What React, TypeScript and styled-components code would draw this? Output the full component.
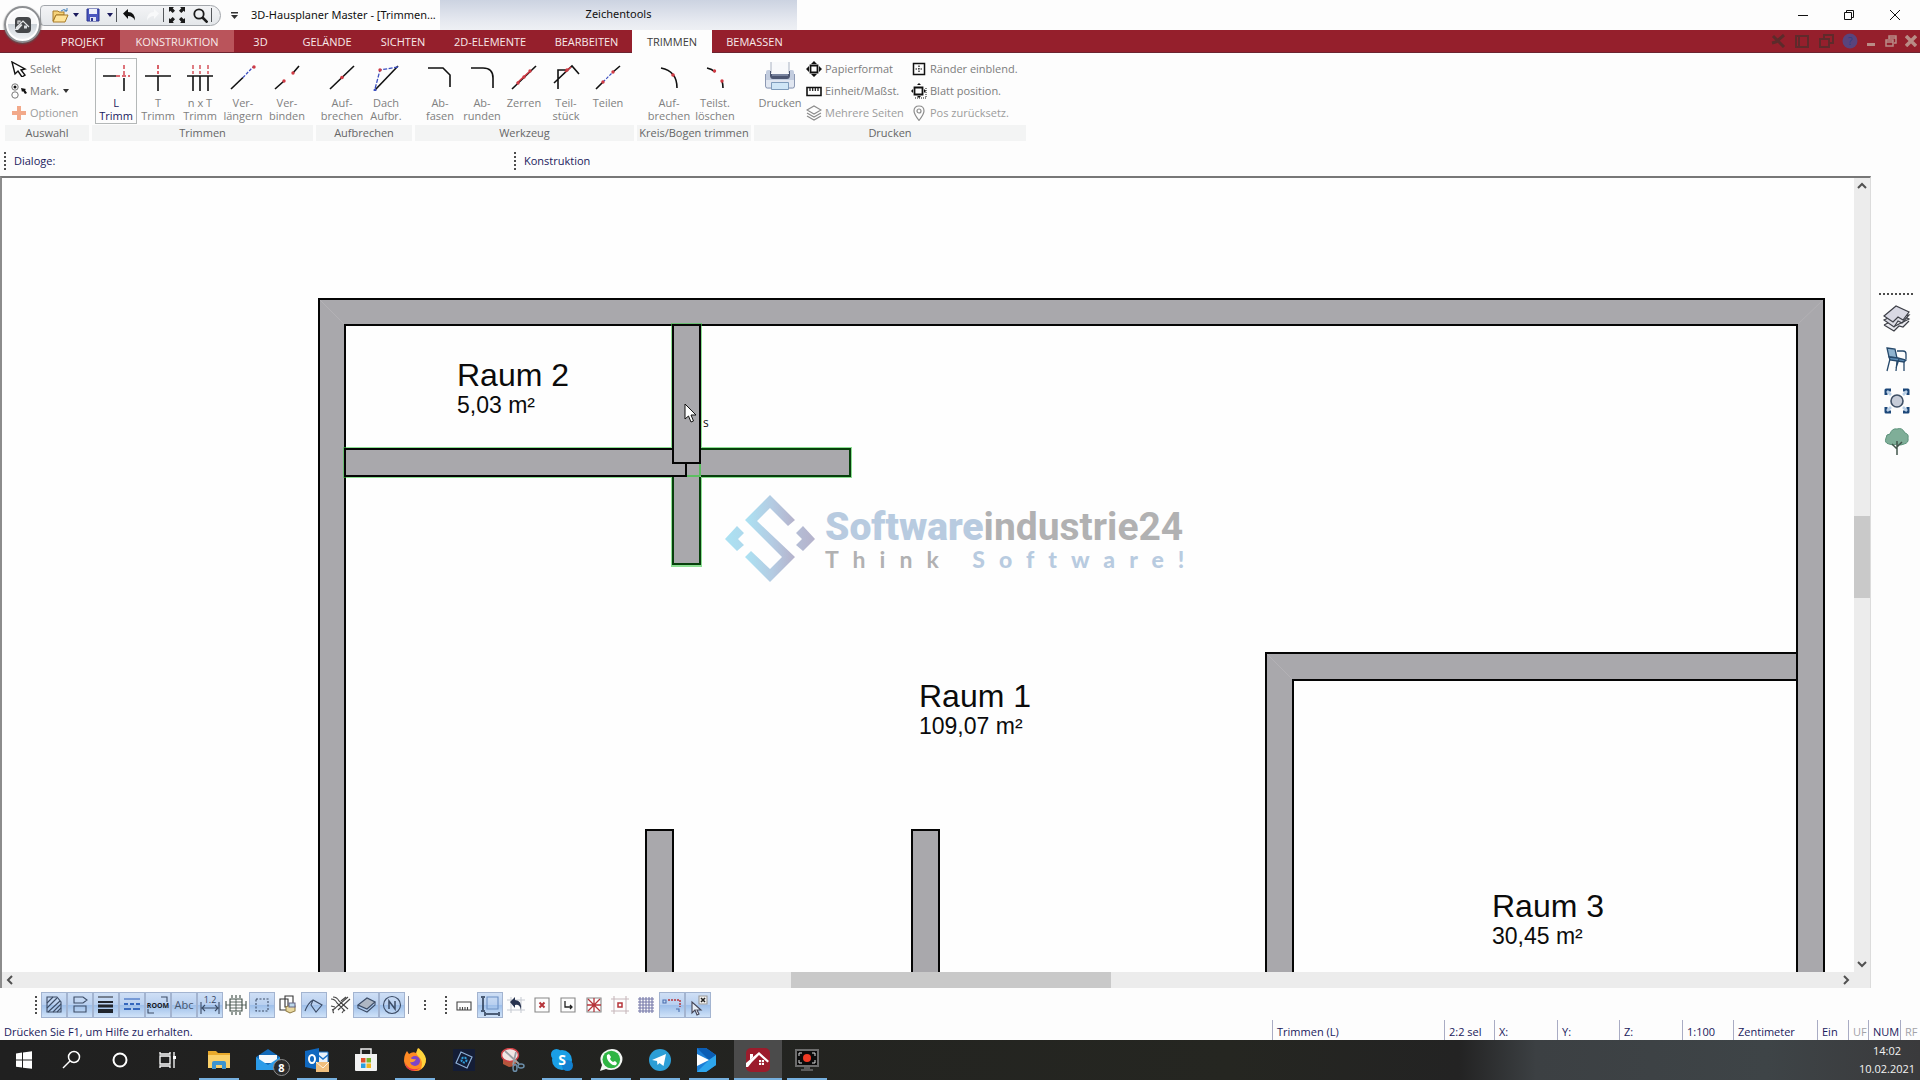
import React from 'react';
import styled, { createGlobalStyle, css } from 'styled-components';

const UI = '"Open Sans", "Noto Sans", "Liberation Sans", sans-serif';
const NAVY = '#1a1a5c';
const CRIMSON = '#951f2c';
const RED = '#d03a44';
const BLUE = '#3b4fc0';

const GlobalStyle = createGlobalStyle`
  *, *::before, *::after { box-sizing: border-box; }
  body { margin: 0; background: #fdfdfd; font: 12px/16px ${UI}; color: #111; }
  button { font: inherit; color: inherit; border: 0; padding: 0; margin: 0; background: none; }
  svg { display: block; flex: none; }
`;

const Shell = styled.div`
  display: flex;
  flex-direction: column;
  height: 100vh;
  overflow: hidden;
  background: #fdfdfd;
`;

/* ---------- title bar ---------- */

const TitleBar = styled.header`
  position: relative;
  display: flex;
  align-items: center;
  height: 30px;
  flex: none;
`;
const AppButton = styled.button`
  position: absolute;
  left: 4px;
  top: 6px;
  z-index: 2;
  width: 37px;
  height: 37px;
  display: grid;
  place-items: center;
  border-radius: 50%;
  border: 2px solid #8d8f92;
  background: linear-gradient(#f8f8f9 0 50%, #cdd3d9 50%, #f4f6f8);
  box-shadow: inset 0 0 0 2px #fff, 0 1px 2px #555;
`;
const QuickBar = styled.div`
  display: flex;
  align-items: center;
  margin-left: 40px;
  width: 181px;
  height: 21px;
  padding-left: 10px;
  border: 1px solid #a2a6ab;
  border-radius: 4px 11px 11px 4px;
  background: linear-gradient(#f3f4f6, #e4e7ea);
`;
const QuickButton = styled.button<{ $w: number }>`
  width: ${p => p.$w}px;
  height: 19px;
  display: grid;
  place-items: center;
`;
const QuickRule = styled.span`
  width: 1px;
  height: 14px;
  background: #55585c;
`;
const CustomizeButton = styled.button`
  width: 26px;
  height: 20px;
  display: grid;
  place-items: center;
`;
const WindowTitle = styled.h1`
  margin: 0;
  padding-left: 4px;
  width: 193px;
  font: 11px/16px "Noto Sans", sans-serif;
  white-space: nowrap;
  color: #111;
`;
const ContextTitle = styled.div`
  width: 357px;
  height: 30px;
  text-align: center;
  font: 11px/28px "Noto Sans", sans-serif;
  background: linear-gradient(#ccd3e1, #e6e9f0 70%, #eef0f4);
`;
const WindowButtons = styled.div`
  display: flex;
  margin-left: auto;
  padding-right: 2px;
`;
const WindowButton = styled.button`
  width: 46px;
  height: 28px;
  display: grid;
  place-items: center;
`;

/* ---------- tab strip ---------- */

const TabStrip = styled.nav`
  display: flex;
  height: 23px;
  flex: none;
  padding-left: 46px;
  background: ${CRIMSON};
  border-bottom: 1px solid #6c2431;
`;
const Tab = styled.button<{ $w: number; $look?: 'soft' | 'active' }>`
  width: ${p => p.$w}px;
  height: 23px;
  line-height: 22px;
  padding-top: 1px;
  font-size: 11px;
  text-align: center;
  color: #f8e9ea;
  ${p => p.$look === 'soft' && css`background: linear-gradient(#ba545b 22px, transparent 22px);`}
  ${p => p.$look === 'active' && css`background: #fdfdfd; color: #3c3c3c;`}
`;
const MdiButtons = styled.div`
  display: flex;
  align-items: center;
  margin-left: auto;
`;
const MdiButton = styled.button<{ $w: number }>`
  width: ${p => p.$w}px;
  height: 20px;
  display: grid;
  place-items: center;
`;

/* ---------- ribbon ---------- */

const Ribbon = styled.div`
  display: flex;
  gap: 3px;
  height: 90px;
  flex: none;
  padding: 5px 0 0 5px;
`;
const Group = styled.section<{ $w: number }>`
  width: ${p => p.$w}px;
  display: flex;
  flex-direction: column;
`;
const GroupBody = styled.div<{ $pad: number }>`
  display: flex;
  height: 67px;
  padding-left: ${p => p.$pad}px;
`;
const GroupName = styled.h2`
  margin: 0;
  height: 16px;
  font: 11px/15px ${UI};
  text-align: center;
  color: #666;
  background: #f3f4f4;
  white-space: nowrap;
`;
const ToolButton = styled.button<{ $w: number; $on?: boolean }>`
  width: ${p => p.$w}px;
  height: 66px;
  display: flex;
  flex-direction: column;
  align-items: center;
  padding-top: 3px;
  border: 1px solid ${p => (p.$on ? '#b4b8b8' : 'transparent')};
  color: ${p => (p.$on ? NAVY : '#808080')};
  font-size: 11px;
  line-height: 13px;
  white-space: nowrap;
  svg { margin-bottom: 5px; }
`;
const SmallColumn = styled.div<{ $w: number }>`
  width: ${p => p.$w}px;
  display: flex;
  flex-direction: column;
`;
const SmallButton = styled.button<{ $dim?: boolean }>`
  height: 22px;
  display: flex;
  align-items: center;
  gap: 3px;
  font-size: 11px;
  white-space: nowrap;
  color: ${p => (p.$dim ? '#9c9c9c' : '#7c7c7c')};
`;

/* ---------- dialog row ---------- */

const DialogRow = styled.div`
  display: flex;
  align-items: center;
  height: 33px;
  flex: none;
  padding: 2px 0 0 4px;
  color: ${NAVY};
`;
const Grip = styled.span<{ $h?: number }>`
  width: 2px;
  height: ${p => p.$h ?? 18}px;
  flex: none;
  background: repeating-linear-gradient(#4c4c4c 0 2px, transparent 2px 4px);
`;
const DialogCell = styled.div<{ $w?: number }>`
  display: flex;
  align-items: center;
  gap: 8px;
  font-size: 11px;
  width: ${p => (p.$w ? `${p.$w}px` : 'auto')};
`;

/* ---------- work area ---------- */

const WorkArea = styled.main`
  display: flex;
  flex: 1;
  min-height: 0;
`;
const Viewport = styled.div`
  flex: 1;
  min-width: 0;
  display: grid;
  grid-template-columns: 1fr 16px;
  grid-template-rows: 1fr 16px;
  border-top: 2px solid #777;
  border-left: 2px solid #8c8c8c;
  border-right: 1px solid #dcdcdc;
  background: #ececec;
`;
const Sheet = styled.div`
  position: relative;
  overflow: hidden;
  background: #fefefe;
`;
const Plan = styled.svg`
  width: 100%;
  height: 100%;
`;
const RoomTag = styled.div<{ $x: number; $y: number }>`
  position: absolute;
  left: ${p => p.$x}px;
  top: ${p => p.$y}px;
  font-family: "Liberation Sans", Arial, sans-serif;
  color: #0b0b0b;
  white-space: nowrap;
`;
const RoomName = styled.div`
  font-size: 32px;
  line-height: 34px;
`;
const RoomSize = styled.div`
  font-size: 23px;
  line-height: 26px;
`;
const Watermark = styled.div`
  position: absolute;
  left: 723px;
  top: 317px;
  display: flex;
  gap: 10px;
`;
const Brand = styled.div`
  padding-top: 11px;
  font: 700 39px/42px Roboto, sans-serif;
  color: #b1b1b2;
  white-space: nowrap;
  b { color: #b8cbe0; }
`;
const Slogan = styled.div`
  font: 700 23px/22px Lato, sans-serif;
  letter-spacing: 14px;
  color: #b1b1b2;
  white-space: nowrap;
  b { color: #b8cbe0; }
`;
const Pointer = styled.div`
  position: absolute;
  left: 682px;
  top: 225px;
  display: flex;
  gap: 6px;
  span { padding-top: 13px; font: 12px/14px ${UI}; }
`;
const Scroll = styled.div<{ $axis: 'row' | 'column' }>`
  display: flex;
  flex-direction: ${p => p.$axis};
  background: #ececec;
`;
const ScrollArrow = styled.button`
  width: 16px;
  height: 16px;
  flex: none;
  display: grid;
  place-items: center;
`;
const ScrollPart = styled.span<{ $grow: number; $thumb?: boolean }>`
  flex: ${p => p.$grow} 1 0;
  background: ${p => (p.$thumb ? '#c9c9c9' : 'transparent')};
`;
const SidePanel = styled.aside`
  width: 49px;
  flex: none;
  display: flex;
  flex-direction: column;
  align-items: center;
  padding-top: 117px;
`;
const SideGrip = styled.span`
  width: 34px;
  height: 2px;
  margin-bottom: 3px;
  background: repeating-linear-gradient(90deg, #4c4c4c 0 2px, transparent 2px 4px);
`;
const SideButton = styled.button`
  width: 36px;
  height: 41px;
  display: grid;
  place-items: center;
  margin-left: 2px;
`;

/* ---------- lower bars ---------- */

const ToggleBar = styled.div`
  display: flex;
  align-items: center;
  height: 32px;
  flex: none;
  padding: 2px 0 0 35px;
`;
const ToggleSet = styled.div<{ $gap: number }>`
  display: flex;
  margin-left: ${p => p.$gap}px;
`;
const Toggle = styled.button<{ $on?: boolean }>`
  width: 26px;
  height: 26px;
  display: grid;
  place-items: center;
  ${p => p.$on && css`
    border: 1px solid #a3b4d0;
    background: linear-gradient(#cfdff5, #b9d0f0 48%, #9fc0ea 52%, #cfe2f8);
  `}
`;
const ToggleRule = styled.span`
  width: 1px;
  height: 18px;
  margin: 0 15px 0 3px;
  background: #8a8fa0;
`;
const StatusBar = styled.footer`
  display: flex;
  height: 20px;
  flex: none;
  font-size: 11px;
  line-height: 23px;
  color: ${NAVY};
  overflow: hidden;
`;
const StatusHint = styled.div`
  flex: 1;
  padding-left: 4px;
  white-space: nowrap;
`;
const StatusCell = styled.div<{ $w: number; $off?: boolean }>`
  width: ${p => p.$w}px;
  padding-left: 4px;
  border-left: 1px solid #a9acc4;
  white-space: nowrap;
  color: ${p => (p.$off ? '#a2a2a8' : NAVY)};
  overflow: hidden;
`;
const TaskBar = styled.div`
  display: flex;
  height: 40px;
  flex: none;
  background: linear-gradient(90deg, #202020 0, #252621 64%, #232323 76%, #3c4043 80%, #3e4447 92%, #3a3a3c 100%);
`;
const TaskButton = styled.button<{ $run?: boolean; $active?: boolean; $lead?: boolean }>`
  position: relative;
  width: 48px;
  height: 40px;
  margin-right: ${p => (p.$lead ? 0 : 1)}px;
  display: grid;
  place-items: center;
  background: ${p => (p.$active ? '#4b4b4b' : 'none')};
  &::after {
    content: '';
    position: absolute;
    bottom: 0;
    left: ${p => (p.$active ? 0 : 4)}px;
    right: ${p => (p.$active ? 0 : 4)}px;
    height: 2px;
    background: ${p => (p.$run ? '#76b0df' : 'transparent')};
  }
`;
const TaskGap = styled.span`
  width: 3px;
`;
const MailBadge = styled.span`
  position: absolute;
  left: 29px;
  top: 19px;
  width: 17px;
  height: 17px;
  border-radius: 50%;
  border: 1px solid #8d8d8d;
  background: #2b2b2b;
  color: #fff;
  font: 700 11px/15px ${UI};
  text-align: center;
`;
const Clock = styled.time`
  margin-left: auto;
  width: 66px;
  padding-top: 2px;
  font-size: 11px;
  line-height: 18px;
  text-align: center;
  color: #f3f3f3;
`;

/* ---------- drawings ---------- */

type IconProps = { w?: number; h?: number; children: React.ReactNode };
const Ico = ({ w = 28, h = 28, children }: IconProps) => (
  <svg width={w} height={h} viewBox={`0 0 ${w} ${h}`} fill="none" stroke="#111" strokeWidth="1.6" aria-hidden="true">
    {children}
  </svg>
);
const Caret = () => (
  <Ico w={6} h={4}><path d="M0 0h6L3 4z" fill={NAVY} stroke="none" /></Ico>
);

const trimTools = [
  { l: ['L', 'Trimm'], w: 42, on: true, i: <><path d="M1 14h13M22 16v13" /><path d="M14 14h14M22 3v12" stroke={RED} strokeWidth="1.4" strokeDasharray="4 2" /></> },
  { l: ['T', 'Trimm'], w: 42, i: <><path d="M1 14h26M14 14v15" /><path d="M14 3v9" stroke={RED} strokeDasharray="4 2" /></> },
  { l: ['n x T', 'Trimm'], w: 42, i: <><path d="M1 14h26M7 14v15M14 14v15M22 14v15" /><path d="M7 3v9M14 3v9M22 3v9" stroke={RED} strokeWidth="1.3" strokeDasharray="4 2" /></> },
  { l: ['Ver-', 'längern'], w: 44, i: <><path d="M2 27L14 15.500" /><path d="M14 15.500L24 5" stroke={BLUE} strokeWidth="1.300" strokeDasharray="3 1.500" /><circle cx="25" cy="5" r="1.700" fill={RED} stroke="none" /></> },
  { l: ['Ver-', 'binden'], w: 44, i: <><path d="M2 27l9-8M20 11l6-7" /><circle cx="11" cy="19" r="1.700" fill={RED} stroke="none" /><circle cx="20" cy="11" r="1.700" fill={RED} stroke="none" /></> },
];
const breakTools = [
  { l: ['Auf-', 'brechen'], w: 44, i: <><path d="M2 27L26 4" /><circle cx="14" cy="15.500" r="1.800" fill={RED} stroke="none" /></> },
  { l: ['Dach', 'Aufbr.'], w: 44, i: <><path d="M3 28L26 4" /><path d="M26 5L8 8L3 27" stroke={BLUE} strokeWidth="1.300" strokeDasharray="4 1.500" /><circle cx="8" cy="8" r="1.700" fill={RED} stroke="none" /><circle cx="3" cy="28" r="1.500" fill={BLUE} stroke="none" /></> },
];
const workTools = [
  { l: ['Ab-', 'fasen'], w: 42, i: <path d="M2 6h15l7 7v12" /> },
  { l: ['Ab-', 'runden'], w: 42, i: <path d="M3 6h12q10 0 10 10v10" /> },
  { l: ['Zerren'], w: 42, i: <><path d="M2 27L26 4" /><path d="M7 21l12-11" stroke={RED} /><g fill={RED} stroke="none"><circle cx="8" cy="21" r="1.700" /><circle cx="14" cy="15" r="1.700" /><circle cx="20" cy="9" r="1.700" /></g></> },
  { l: ['Teil-', 'stück'], w: 42, i: <><path d="M2 21L20 4l7 8M6 27V8h10" /><path d="M13 10l6-5" stroke={RED} /><circle cx="15" cy="8" r="1.700" fill={RED} stroke="none" /></> },
  { l: ['Teilen'], w: 42, i: <><path d="M2 27l7-7M19 10l7-6" /><path d="M9 20l10-10" stroke={BLUE} strokeWidth="1.200" strokeDasharray="3 1.500" /><circle cx="9" cy="20" r="1.700" fill={RED} stroke="none" /><circle cx="19" cy="10" r="1.700" fill={RED} stroke="none" /></> },
];
const arcTools = [
  { l: ['Auf-', 'brechen'], w: 46, i: <><path d="M6 6Q22 9 22 26" /><circle cx="18" cy="13" r="1.800" fill={RED} stroke="none" /></> },
  { l: ['Teilst.', 'löschen'], w: 46, i: <><path d="M6 6q5 1 8 4M21 19q1 3 1 7" /><circle cx="13.500" cy="9" r="1.700" fill={RED} stroke="none" /><circle cx="21" cy="19" r="1.700" fill={RED} stroke="none" /></> },
];

const Printer = () => (
  <svg width="32" height="29" viewBox="0 0 32 29" stroke="none" aria-hidden="true">
    <path d="M2 10q0-2 2-2h2v8h20V8h2q2 0 2 2v14q0 2-2 2H4q-2 0-2-2z" fill="#c3cddf" />
    <path d="M1 18h30v6q0 3-3 3H4q-3 0-3-3z" fill="#e1e7f1" />
    <path d="M1.500 12v12q0 2 2 2h25q2 0 2-2V12" fill="none" stroke="#8d99b3" />
    <path d="M7 0h18v12H7z" fill="#f8f9fb" />
    <path d="M7 0v11M25 0v11" fill="none" stroke="#a9b2c2" />
    <path d="M6 9h1v3h18V9h1v5q0 3-3 3H9q-3 0-3-3z" fill="#4c5672" />
    <path d="M8 12h16v2H8z" fill="#79849f" />
    <path d="M7.500 20.500h17v7h-17z" fill="#cfe6f6" stroke="#7f9cbb" />
  </svg>
);

const ToolSet = ({ items }: { items: { l: string[]; w: number; on?: boolean; i: React.ReactNode }[] }) => (
  <>
    {items.map((t, n) => (
      <ToolButton key={n} $w={t.w} $on={t.on}>
        <Ico w={29} h={29}>{t.i}</Ico>
        {t.l.map(s => <span key={s}>{s}</span>)}
      </ToolButton>
    ))}
  </>
);

const tabs: { t: string; w: number; k?: 'soft' | 'active' }[] = [
  { t: 'PROJEKT', w: 74 }, { t: 'KONSTRUKTION', w: 114, k: 'soft' }, { t: '3D', w: 53 }, { t: 'GELÄNDE', w: 80 },
  { t: 'SICHTEN', w: 72 }, { t: '2D-ELEMENTE', w: 102 }, { t: 'BEARBEITEN', w: 91 }, { t: 'TRIMMEN', w: 80, k: 'active' },
  { t: 'BEMASSEN', w: 85 },
];

const WALL = '#a9a8ac';
const FloorPlan = () => (
  <Plan aria-label="Grundriss">
    <g transform="translate(-2 -178)" fill={WALL} stroke="#050505" strokeWidth="2">
      <path fillRule="evenodd" d="M319 299H1824V1700H319zM345 325V1600H1797V325z" />
      <path d="M1266 1700V653H1797V680H1293V1700z" />
      <path d="M320 300l24 24M1823 300l-25 24M1267 654l25 25" stroke="#b3b1b5" strokeWidth="1" />
      <path d="M646 830h27v870h-27zM912 830h27v870h-27z" />
      <g stroke="#3fc94a" strokeOpacity=".6" strokeWidth="4">
        <path d="M345 449h505v27H345zM673 325h27v240h-27z" />
      </g>
      <path d="M673 476h27v88h-27zM700 449h150v27H700z" stroke="#07400c" />
      <path d="M674 462h27v15h-27z" stroke="none" />
      <path d="M687 476h13M700 463v13" stroke="#5cbf62" />
      <path d="M345 449h341v27H345z" />
      <path d="M673 325h27v138h-27z" />
    </g>
  </Plan>
);

const Logo = () => (
  <svg width="90" height="88" viewBox="0 0 90 88" aria-hidden="true">
    <defs>
      <linearGradient id="lg" x1="0" x2="1"><stop offset="0" stopColor="#abe2f3" /><stop offset=".55" stopColor="#b4cbe2" /><stop offset="1" stopColor="#b5b2cb" /></linearGradient>
    </defs>
    <g fill="url(#lg)">
      <path d="M45 0L70 25L63 31L45 13L32 26L70 62L45 87L20 62L26 56L45 74L57 62L20 25z" />
      <path d="M12 31L19 38L13 44L19 50L12 56L0 44zM78 31L90 44L78 56L71 50L77 44L71 38z" />
    </g>
  </svg>
);

const arrows = {
  up: 'M4 10l4-4 4 4', down: 'M4 6l4 4 4-4', left: 'M10 4l-4 4 4 4', right: 'M6 4l4 4-4 4',
};
const Arrow = ({ d }: { d: keyof typeof arrows }) => (
  <ScrollArrow aria-label={d}><svg width="16" height="16" fill="none" stroke="#505050" strokeWidth="2"><path d={arrows[d]} /></svg></ScrollArrow>
);

const sideIcons: [string, React.ReactNode][] = [
  ['Ebenen', <g strokeWidth="1.2" stroke="#3d3f47"><path d="M1 20l6-3 5 4 6-3 8-4-4-2M1 20l10 6 5-5 4 1 6-6" fill="#e9e9ee" /><path d="M1 15l6-3 19-2-7 8-4-2-4 6z" fill="#dcdce4" /><path d="M1 11L13 1l13 6-6 8-5-3-5 5z" fill="#d9d9e4" /></g>],
  ['Möbel', <g stroke="#27496b" strokeWidth="1.3"><path d="M4 2l8 1 2 9-8-1z" fill="#8fb3cf" /><path d="M6 11l9 1 8 2-2 2-14-2z" fill="#5f8fb8" /><path d="M7 13l-3 12M14 15l-1 10M21 16v9M16 13l-3 9M14 5h6q3 0 3 3v5" /></g>],
  ['Fokus', <g><circle cx="14" cy="14" r="6" fill="#c6ccd8" stroke="#3f5066" /><path d="M3 8V3h5M20 3h5v5M25 20v5h-5M8 25H3v-5" stroke="#1c4779" strokeWidth="3" strokeLinejoin="round" /><path d="M4 4l4 4M24 4l-4 4M24 24l-4-4M4 24l4-4" stroke="#b9cfe6" strokeWidth="2.5" /></g>],
  ['Pflanzen', <g><path d="M6 16q-5-1-3-6 0-4 4-4 2-6 7-5 5-2 8 4 4 1 3 5 1 5-4 6-3 2-7 0-4 2-8 0z" fill="#7fae98" stroke="#5f947d" strokeWidth="1" /><path d="M14 27V13M14 21l-5-5M14 19l5-5" stroke="#42554b" strokeWidth="1.5" /></g>],
];

const INK = '#3c4c66';
const viewToggles: { on?: boolean; i: React.ReactNode }[] = [
  { on: true, i: <><path d="M4 3h10l4 5v10H4z" /><path d="M4 9l6-6M4 14L14 4M5 18L17 7M10 18l8-8M14 18l4-4" /></> },
  { on: true, i: <path d="M5 3h9l4 3-4 3H5zM5 12h12v6H5z" /> },
  { on: true, i: <g stroke="#20242c"><path d="M3 3h15" strokeWidth="1" /><path d="M3 8h15" strokeWidth="2" /><path d="M3 12h15" strokeWidth="3" /><path d="M3 17h15" strokeWidth="4" /></g> },
  { on: true, i: <g stroke="#3567bd"><path d="M3 5h16" /><path d="M3 10h16" strokeWidth="2" strokeDasharray="4 2" /><path d="M3 15h16" strokeWidth="2" strokeDasharray="7 2" /></g> },
  { on: true, i: <><path d="M14 3h6v5M1 15v4h6" /><text x="11" y="14" textAnchor="middle" fontSize="7" fontWeight="700" fill="#15181f" stroke="none">ROOM</text></> },
  { on: true, i: <text x="11" y="15" textAnchor="middle" fontSize="11" fill="#46546c" stroke="none">Abc</text> },
  { on: true, i: <><path d="M2 8v12M20 8v12M3 14h16M6 11l-3 3 3 3M16 11l3 3-3 3" /><text x="11" y="9" textAnchor="middle" fontSize="9" fill="#33435d" stroke="none">1.2</text></> },
  { i: <g stroke="#3b4a42"><path d="M5 5h12v12H5zM1 7v8M21 7v8M7 1v3M11 1v3M15 1v3M7 18v3M11 18v3M15 18v3" /><path d="M1 11h20M11 5v12M5 8h12M5 14h12" strokeWidth=".8" /></g> },
  { on: true, i: <path d="M5 5h12v12H5z" strokeDasharray="2 1.500" /> },
  { i: <><path d="M8 2h8v11H8zM3 5h8v11H3z" fill="#fff" stroke="#333" /><path d="M9 13l4-2 5 1v5l-5 2-4-2z" fill="#ead9a0" stroke="#94804a" /><path d="M12 9h6v4h-6z" fill="#bcd8ea" stroke="#668" /></> },
  { on: true, i: <path d="M2 17q3-8 8-11l9 5-6 7-5-7 2-5" /> },
  { i: <g stroke="#444"><path d="M2 5q4 0 6 4l8 8M4 3q4 0 6 4l9 8M19 3L5 15q-2 3 0 4M21 5L9 16M2 12l4 1M3 16l4-2M12 7l5-4M13 19l2-3" /></g> },
  { on: true, i: <><path d="M3 11l9-7 8 4-8 7z" fill="#aeb7c4" /><path d="M3 11v3l9 4 8-7V8" /></> },
  { on: true, i: <><circle cx="11" cy="11" r="8.500" /><path d="M8 15V7l6 8V7" strokeWidth="1.500" /></> },
];
const snapToggles: { on?: boolean; i: React.ReactNode }[] = [
  { i: <g stroke="#444"><path d="M4 8h14v8H4z" /><path d="M7 16v-3M9.500 16v-3M12 16v-3M14.500 16v-3" /></g> },
  { on: true, i: <><path d="M4 4v12M2 3h4M2 17h4M7 20h12M6 18v4M20 18v4" stroke="#25344e" strokeWidth="1.500" /><path d="M8 3h11v12H8z" stroke="#6b8fc4" /></> },
  { i: <><path d="M2 6h18M2 16h18M6 3v16M16 3v16" stroke="#c8ccd4" /><path d="M5 8l5-5v3q7 0 6 10-1-6-6-5v3z" fill="#28334f" stroke="none" /></> },
  { i: <><path d="M4 4h14v14H4z" stroke="#888" /><path d="M8.500 8.500l5 5M13.500 8.500l-5 5" stroke="#b6343a" strokeWidth="2" /></> },
  { i: <><path d="M4 4h14v14H4z" stroke="#888" /><path d="M8 7v6h7M13 11l2 2-2 2" stroke="#222" strokeWidth="1.300" /></> },
  { i: <><path d="M4 4h14v14H4z" stroke="#888" /><path d="M5 5l12 12M17 5L5 17M11 4v14M4 11h14" stroke="#b6343a" strokeWidth="1.300" /></> },
  { i: <><path d="M2 5h18M2 17h18M5 2v18M17 2v18" stroke="#c8b8bc" /><path d="M9 9h4v4H9z" stroke="#b6343a" strokeWidth="1.500" /></> },
  { i: <path d="M3 5h16M3 8h16M3 11h16M3 14h16M3 17h16M5 3v16M8 3v16M11 3v16M14 3v16M17 3v16" stroke="#7477a8" /> },
  { on: true, i: <><path d="M7 6h12v7" stroke="#b6343a" strokeWidth="1.500" strokeDasharray="2 1" /><path d="M2 6h3v3H2zM15 15h3v3" stroke="#4b6fae" /></> },
  { on: true, i: <><path d="M5 8v11l3-3 2 5 2-1-2-4h4z" fill="#e8eef7" stroke="#445" /><path d="M12 2h8v8h-8z" fill="#f1f1f1" stroke="#999" /><path d="M14 4l4 4M18 4l-4 4" stroke="#222" strokeWidth="1.500" /></> },
];

const ToggleIcon = ({ children }: { children: React.ReactNode }) => (
  <svg width="22" height="22" viewBox="0 0 22 22" fill="none" stroke={INK} strokeWidth="1.1" aria-hidden="true">{children}</svg>
);

const statusCells: [string, number, boolean?][] = [
  ['Trimmen (L)', 172], ['2:2 sel', 50], ['X:', 63], ['Y:', 62], ['Z:', 63], ['1:100', 51],
  ['Zentimeter', 84], ['Ein', 31], ['UF', 20, true], ['NUM', 32], ['RF', 20, true],
];

const leadTasks: [string, React.ReactNode][] = [
  ['Start', <path d="M4 5.500l6-1v7H4zM11 4.400l9-1.200v8.300h-9zM4 12.500h6v7l-6-.8zM11 12.500h9v8.300l-9-1.100z" fill="#fff" />],
  ['Suche', <g fill="none" stroke="#fff" strokeWidth="1.500"><circle cx="14" cy="9" r="5.500" /><path d="M10 13l-7 7" /></g>],
  ['Cortana', <circle cx="12" cy="12" r="6.500" fill="none" stroke="#fff" strokeWidth="2" />],
  ['Aktive Anwendungen', <g fill="none" stroke="#fff" strokeWidth="1.300"><path d="M4 8h10v8H4zM4 4v2h10V4M4 20v-2h10v2M18 4v16" /><path d="M17 8h3v3h-3z" fill="#fff" stroke="none" /></g>],
];
const appTasks: { n: string; run?: boolean; active?: boolean; badge?: string; i: React.ReactNode }[] = [
  { n: 'Explorer', run: true, i: <><path d="M1 3h8l2 2h12v5H1z" fill="#e8a92c" /><path d="M1 7h22v13H1z" fill="#fad06a" /><path d="M5 21v-6q0-2 2-2h10q2 0 2 2v6h-4v-4H9v4z" fill="#3d94cf" /></> },
  { n: 'Mail', badge: '8', i: <><path d="M0 9l12-8 12 8v12H0z" fill="#1269b8" /><path d="M3 7h18v8H3z" fill="#f6f9fc" /><path d="M0 9l12 8 12-8v13H0z" fill="#2b9be8" /></> },
  { n: 'Outlook', run: true, i: <><path d="M13 4h10v12H13z" fill="#e9f2fb" stroke="#1a72c8" /><path d="M13 7l5 4 5-4" fill="none" stroke="#1a72c8" strokeWidth="1.500" /><path d="M0 3l14-3v22L0 19z" fill="#1068bf" /><ellipse cx="7" cy="11" rx="3" ry="4" fill="none" stroke="#fff" strokeWidth="2" /><path d="M11 14h13v10H11z" fill="#f0bf7e" /><path d="M11 14l7 6 6-6" fill="none" stroke="#fff3de" /></> },
  { n: 'Store', i: <><path d="M7 6V1h10v5" fill="none" stroke="#eee" strokeWidth="1.500" /><path d="M1 6h22v16q0 1-1 1H2q-1 0-1-1z" fill="#f2f2f2" /><path d="M7 10h4.500v4.500H7z" fill="#e2502c" /><path d="M12.500 10H17v4.500h-4.500z" fill="#7bb52c" /><path d="M7 15.500h4.500V20H7z" fill="#2b9fe0" /><path d="M12.500 15.500H17V20h-4.500z" fill="#f3b51f" /></> },
  { n: 'Firefox', run: true, i: <><path d="M4 3l2 3q4-3 7-1 1-3 3-5 1 4 4 6 4 5 2 10-3 8-11 7Q2 22 1 13 1 7 4 3z" fill="#ff8a24" /><path d="M15 0q7 5 8 11 0 7-5 10 3-8-3-13-3-3 0-8z" fill="#ffd43c" /><path d="M2 15q5 9 15 5-5 4-10 2-4-2-5-7z" fill="#e8304d" /><circle cx="12" cy="13" r="5" fill="#7e45c9" /><path d="M7 10q4 2 6 1-2 4-6 3z" fill="#ff9d2c" /></> },
  { n: 'Videoeditor', i: <><path d="M1 1h22v22H1z" fill="#141d36" /><path d="M9 4l11 5-5 11-11-5z" fill="none" stroke="#8fb0d6" strokeWidth="1.200" /><circle cx="12" cy="12" r="2.500" fill="none" stroke="#2f9fdc" strokeWidth="2" strokeDasharray="2 1" /></> },
  { n: 'Snipping', i: <><path d="M2 12h14l-2 6-6 1-6-3z" fill="#b5563c" /><ellipse cx="9" cy="7" rx="8.500" ry="6.500" fill="#f1e6e4" stroke="#cf4146" strokeWidth="1.500" /><path d="M4 3l14 13M15 4l-3 13" stroke="#9a9ea3" strokeWidth="1.800" /><ellipse cx="14" cy="20" rx="2" ry="3.500" fill="none" stroke="#6b8da8" strokeWidth="1.500" /><ellipse cx="20" cy="18" rx="3" ry="2" fill="none" stroke="#6b8da8" strokeWidth="1.500" /></> },
  { n: 'Skype', run: true, i: <><circle cx="12" cy="12" r="10" fill="#1a9fe6" /><circle cx="6.500" cy="6.500" r="5.500" fill="#1a9fe6" /><circle cx="17.500" cy="17.500" r="5.500" fill="#1280d0" /><text x="12" y="17" textAnchor="middle" fontSize="14" fontWeight="700" fill="#fff">S</text></> },
  { n: 'WhatsApp', run: true, i: <><path d="M1 23l2-6Q-1 9 5 4q6-5 13-2 7 5 5 12-3 8-11 8-3 0-5-1z" fill="#f4f7f4" /><circle cx="12.300" cy="11.500" r="8.800" fill="#2fb544" /><path d="M8 7l2-1 2 3-1 2q1 2 3 3l2-1 2 2-1 2q-3 1-6-2-4-4-3-8z" fill="#fff" /></> },
  { n: 'Telegram', run: true, i: <><circle cx="12" cy="12" r="11" fill="#2c9ed6" /><path d="M4 12l14-6-2.500 12-4-3-2 2-.5-4z" fill="#fff" /></> },
  { n: 'Player', run: true, i: <><path d="M0 0h9l10 7v10L9 24H0z" fill="#1d7fd6" /><path d="M0 0h9l10 7-7 5z" fill="#0b5db4" /><path d="M0 24h9l10-7V7l-7 5z" fill="#2ea6ec" /><path d="M0 6l12 6-12 6z" fill="#fff" /></> },
  { n: '3D-Hausplaner', run: true, active: true, i: <><rect width="24" height="24" rx="5" fill="#9b1c2c" /><path d="M4 12V6h3v3z" fill="#fff" /><path d="M0 15L13 4l10 9-1.500 1.500L13 7l-7 7-4 5H0z" fill="#fff" /><path d="M13 12h5v5h-5z" fill="#fff" /><path d="M15.500 12v5M13 14.500h5" stroke="#9b1c2c" strokeWidth=".8" /></> },
  { n: 'Recorder', run: true, i: <><path d="M1 2h22v16H1z" fill="#0b0b0b" stroke="#6d6d6d" strokeWidth="2" /><circle cx="12" cy="10" r="4" fill="#ef3a24" /><path d="M4 8V5h3M17 5h3v3M20 12v3h-3M7 15H4v-3" stroke="#ddd" fill="none" /><path d="M9 19h6v2h3v2H6v-2h3z" fill="#5c5c5c" /></> },
];

const small1: { t: string; dim?: boolean; i: React.ReactNode }[] = [
  { t: 'Papierformat', i: <><path d="M4.500 4.500h7v7h-7z" strokeWidth="1.800" /><path d="M8 0l3 3H5zM8 16l3-3H5zM0 8l3-3v6zM16 8l-3-3v6z" fill="#111" stroke="none" /></> },
  { t: 'Einheit/Maßst.', i: <><path d="M1 4.500h14v8H1z" /><path d="M4 5v3M6.700 5v3M9.300 5v3M12 5v3" strokeWidth="1.200" /></> },
  { t: 'Mehrere Seiten', dim: true, i: <g stroke="#8c8c8c" strokeWidth="1.200"><path d="M1 5l7-4 7 4-7 4zM1 8l7 4 7-4M1 11l7 4 7-4" /></g> },
];
const small2: typeof small1 = [
  { t: 'Ränder einblend.', i: <><path d="M2.500 2.500h11v11h-11z" strokeWidth="1.500" /><path d="M8 4.500v7M4.500 8h7" strokeDasharray="1.500 1" strokeWidth="1.200" /></> },
  { t: 'Blatt position.', i: <><path d="M3.500 4.500h8v7h-8z" strokeWidth="1.800" /><path d="M6 2l2-2 2 2zM0 8l2-2v4zM13 6l2 2-2 2zM6 13h4l-2 2z" fill="#111" stroke="none" /><path d="M15 5v10H4" strokeWidth="1" strokeDasharray="1 1" /></> },
  { t: 'Pos zurücksetz.', dim: true, i: <g stroke="#8c8c8c" strokeWidth="1.200"><path d="M8 15.500Q3 9 3 6q0-5 5-5t5 5q0 3-5 9.500z" /><circle cx="8" cy="6" r="2" /></g> },
];
const SmallSet = ({ items, w }: { items: typeof small1; w: number }) => (
  <SmallColumn $w={w}>
    {items.map(s => <SmallButton key={s.t} $dim={s.dim}><Ico w={16} h={16}>{s.i}</Ico>{s.t}</SmallButton>)}
  </SmallColumn>
);

export default function App() {
  return (
    <Shell>
      <GlobalStyle />
      <TitleBar>
        <AppButton aria-label="Anwendungsmenü">
          <svg width="18" height="16" viewBox="0 0 18 16">
            <rect x="1" width="16" height="16" rx="4" fill="#45474a" />
            <path d="M4 7V4h2v1.500M2 11l7-7 6 6" fill="none" stroke="#e4e6e8" strokeWidth="1.200" />
            <path d="M10 8.500h3v3h-3z" fill="#d9dcdf" /><path d="M1 12l6-5 1.500 1L4 13H1z" fill="#e4e6e8" />
          </svg>
        </AppButton>
        <QuickBar>
          <QuickButton $w={18} aria-label="Öffnen"><svg width="17" height="15" viewBox="0 0 17 15"><path d="M1 3h5l1 1h5v3H4l-3 6z" fill="#f5d27a" stroke="#a77b28" /><path d="M4 7h12l-3 7H1z" fill="#ffe49a" stroke="#a77b28" /><path d="M9 3q3-3 6 0M15 0v3h-3" fill="none" stroke="#4a85bd" /></svg></QuickButton>
          <QuickButton $w={14} aria-label="Öffnen Menü"><Caret /></QuickButton>
          <QuickButton $w={20} aria-label="Speichern"><svg width="14" height="14" viewBox="0 0 14 14"><path d="M1 1h12v12H1z" fill="#4b57bf" stroke="#2b3590" /><path d="M3 1h8v5H3z" fill="#edf0fb" /><path d="M4 9h6v4H4z" fill="#dfe2f2" /><path d="M5 10h2v3H5z" fill="#2b3590" /></svg></QuickButton>
          <QuickButton $w={13} aria-label="Speichern Menü"><Caret /></QuickButton>
          <QuickRule />
          <QuickButton $w={24} aria-label="Rückgängig"><svg width="13" height="12" viewBox="0 0 13 12"><path d="M0 4.500L5 0v3q7 0 7 8.500Q10 7 5 7v3z" fill="#111" /></svg></QuickButton>
          <QuickButton $w={22} aria-label="Wiederholen"><svg width="13" height="12" viewBox="0 0 13 12"><path d="M13 4.500L8 0v3q-7 0-7 8.500Q3 7 8 7v3z" fill="#f8f9fa" /></svg></QuickButton>
          <QuickRule />
          <QuickButton $w={25} aria-label="Alles zeigen"><svg width="16" height="16" viewBox="0 0 16 16"><path d="M0 0h5L3.700 1.300 6 3.700 3.700 6 1.300 3.700 0 5zM16 0v5l-1.300-1.300L12.300 6 10 3.700l2.300-2.400L11 0zM0 16v-5l1.300 1.300L3.700 10 6 12.300l-2.300 2.400L5 16zM16 16h-5l1.300-1.300-2.300-2.400 2.300-2.300 2.400 2.300L16 11z" fill="#1c1c1c" /></svg></QuickButton>
          <QuickButton $w={22} aria-label="Zoom"><svg width="15" height="15" viewBox="0 0 15 15" fill="none" stroke="#1c1c1c"><circle cx="6" cy="6" r="4.700" strokeWidth="1.800" /><path d="M9.500 9.500l5 5" strokeWidth="2.600" /></svg></QuickButton>
          <QuickRule />
        </QuickBar>
        <CustomizeButton aria-label="Leiste anpassen"><svg width="7" height="7" viewBox="0 0 7 7"><path d="M0 0h7v1.500H0zM0 3h7L3.500 7z" fill="#333" /></svg></CustomizeButton>
        <WindowTitle>3D-Hausplaner Master - [Trimmen...</WindowTitle>
        <ContextTitle>Zeichentools</ContextTitle>
        <WindowButtons>
          <WindowButton aria-label="Minimieren"><svg width="10" height="10"><path d="M0 5.500h10" stroke="#111" /></svg></WindowButton>
          <WindowButton aria-label="Wiederherstellen"><svg width="10" height="10" fill="none" stroke="#111"><path d="M.5 2.500h7v7h-7zM2.500 2.500v-2h7v7h-2" /></svg></WindowButton>
          <WindowButton aria-label="Schließen"><svg width="10" height="10" stroke="#111"><path d="M0 0l10 10M10 0L0 10" /></svg></WindowButton>
        </WindowButtons>
      </TitleBar>

      <TabStrip>
        {tabs.map(t => <Tab key={t.t} $w={t.w} $look={t.k}>{t.t}</Tab>)}
        <MdiButtons>
          <MdiButton $w={24} aria-label="Werkzeuge"><svg width="15" height="14" stroke="#5b2b2b" strokeWidth="3" fill="none"><path d="M2 2l11 11M13 1L5 8l-4 1" /></svg></MdiButton>
          <MdiButton $w={24} aria-label="Einfügen"><svg width="14" height="14" stroke="#5f2a2b" strokeWidth="2" fill="none"><path d="M1 2h12v11H1zM4 1v12" /></svg></MdiButton>
          <MdiButton $w={24} aria-label="Kopieren"><svg width="15" height="14" stroke="#5f2a2b" strokeWidth="2" fill="none"><path d="M1 5h9v8H1zM5 4V1h9v8h-3" /></svg></MdiButton>
          <MdiButton $w={24} aria-label="Hilfe"><svg width="16" height="16"><circle cx="8" cy="8" r="7.500" fill="#59447c" /><text x="8" y="12" textAnchor="middle" fontSize="11" fill="#2d3f86">?</text></svg></MdiButton>
          <MdiButton $w={18} aria-label="Fenster minimieren"><svg width="10" height="12"><path d="M1 8h8v3H1z" fill="#b98c86" /></svg></MdiButton>
          <MdiButton $w={22} aria-label="Fenster wiederherstellen"><svg width="12" height="12" stroke="#b98c86" strokeWidth="1.500" fill="none"><path d="M1 5h7v6H1zM4 4V1h7v7H9M1 7h7M4 3h7" /></svg></MdiButton>
          <MdiButton $w={18} aria-label="Fenster schließen"><svg width="12" height="12" stroke="#b98c86" strokeWidth="3.500"><path d="M1 1l10 10M11 1L1 11" /></svg></MdiButton>
        </MdiButtons>
      </TabStrip>

      <Ribbon>
        <Group $w={84}>
          <GroupBody $pad={6}>
            <SmallColumn $w={78}>
              <SmallButton><Ico w={16} h={16}><path d="M1 1l3 12 3-3 4 6 3-2-4-5 4-1z" fill="#fff" strokeWidth="1.400" /></Ico>Selekt</SmallButton>
              <SmallButton><Ico w={16} h={16}><g stroke="#777" strokeWidth="1"><circle cx="4" cy="4" r="3.200" /><circle cx="4" cy="12" r="3.200" /></g><circle cx="4" cy="4" r="1.500" fill="#111" stroke="none" /><path d="M10 5l5 1-1 1 2 3-2 1-2-3-1 1z" fill="#111" stroke="none" /></Ico>Mark.<Ico w={8} h={4}><path d="M1 0h6L4 4z" fill="#333" stroke="none" /></Ico></SmallButton>
              <SmallButton $dim><Ico w={16} h={16}><path d="M6 1h4v5h5v4h-5v5H6v-5H1V6h5z" fill="#f2a98a" stroke="none" /></Ico>Optionen</SmallButton>
            </SmallColumn>
          </GroupBody>
          <GroupName>Auswahl</GroupName>
        </Group>
        <Group $w={221}><GroupBody $pad={3}><ToolSet items={trimTools} /></GroupBody><GroupName>Trimmen</GroupName></Group>
        <Group $w={96}><GroupBody $pad={4}><ToolSet items={breakTools} /></GroupBody><GroupName>Aufbrechen</GroupName></Group>
        <Group $w={219}><GroupBody $pad={4}><ToolSet items={workTools} /></GroupBody><GroupName>Werkzeug</GroupName></Group>
        <Group $w={114}><GroupBody $pad={9}><ToolSet items={arcTools} /></GroupBody><GroupName>Kreis/Bogen trimmen</GroupName></Group>
        <Group $w={272}>
          <GroupBody $pad={4}>
            <ToolButton $w={44}><Printer /><span>Drucken</span></ToolButton>
            <SmallColumn $w={4} />
            <SmallSet items={small1} w={105} />
            <SmallSet items={small2} w={115} />
          </GroupBody>
          <GroupName>Drucken</GroupName>
        </Group>
      </Ribbon>

      <DialogRow>
        <DialogCell $w={510}><Grip />Dialoge:</DialogCell>
        <DialogCell><Grip />Konstruktion</DialogCell>
      </DialogRow>

      <WorkArea>
        <Viewport>
          <Sheet>
            <FloorPlan />
            <RoomTag $x={455} $y={180}><RoomName>Raum 2</RoomName><RoomSize>5,03 m²</RoomSize></RoomTag>
            <RoomTag $x={917} $y={501}><RoomName>Raum 1</RoomName><RoomSize>109,07 m²</RoomSize></RoomTag>
            <RoomTag $x={1490} $y={711}><RoomName>Raum 3</RoomName><RoomSize>30,45 m²</RoomSize></RoomTag>
            <Watermark>
              <Logo />
              <div>
                <Brand><b>Software</b>industrie24</Brand>
                <Slogan>Think <b>Software!</b></Slogan>
              </div>
            </Watermark>
            <Pointer>
              <svg width="13" height="20" viewBox="0 0 13 20"><path d="M1 1v15l3.500-3 2.500 6 2.500-1-2.500-6H12z" fill="#fff" stroke="#111" /></svg>
              <span>s</span>
            </Pointer>
          </Sheet>
          <Scroll $axis="column">
            <Arrow d="up" /><ScrollPart $grow={322} /><ScrollPart $grow={81} $thumb /><ScrollPart $grow={358} /><Arrow d="down" />
          </Scroll>
          <Scroll $axis="row">
            <Arrow d="left" /><ScrollPart $grow={773} /><ScrollPart $grow={320} $thumb /><ScrollPart $grow={727} /><Arrow d="right" />
          </Scroll>
        </Viewport>
        <SidePanel>
          <SideGrip />
          {sideIcons.map(([n, i]) => <SideButton key={n} aria-label={n}><Ico>{i}</Ico></SideButton>)}
        </SidePanel>
      </WorkArea>

      <ToggleBar>
        <Grip />
        <ToggleSet $gap={4}>{viewToggles.map((t, n) => <Toggle key={n} $on={t.on}><ToggleIcon>{t.i}</ToggleIcon></Toggle>)}</ToggleSet>
        <ToggleRule />
        <Grip $h={10} />
        <ToggleSet $gap={19}><Grip /></ToggleSet>
        <ToggleSet $gap={4}>{snapToggles.map((t, n) => <Toggle key={n} $on={t.on}><ToggleIcon>{t.i}</ToggleIcon></Toggle>)}</ToggleSet>
      </ToggleBar>

      <StatusBar>
        <StatusHint>Drücken Sie F1, um Hilfe zu erhalten.</StatusHint>
        {statusCells.map(([t, w, off]) => <StatusCell key={t} $w={w} $off={off}>{t}</StatusCell>)}
      </StatusBar>

      <TaskBar>
        {leadTasks.map(([n, i]) => <TaskButton key={n} $lead aria-label={n}><svg width="24" height="24" viewBox="0 0 24 24">{i}</svg></TaskButton>)}
        <TaskGap />
        {appTasks.map(a => (
          <TaskButton key={a.n} $run={a.run} $active={a.active} aria-label={a.n}>
            <svg width="24" height="24" viewBox="0 0 24 24">{a.i}</svg>
            {a.badge && <MailBadge>{a.badge}</MailBadge>}
          </TaskButton>
        ))}
        <Clock>14:02<br />10.02.2021</Clock>
      </TaskBar>
    </Shell>
  );
}
